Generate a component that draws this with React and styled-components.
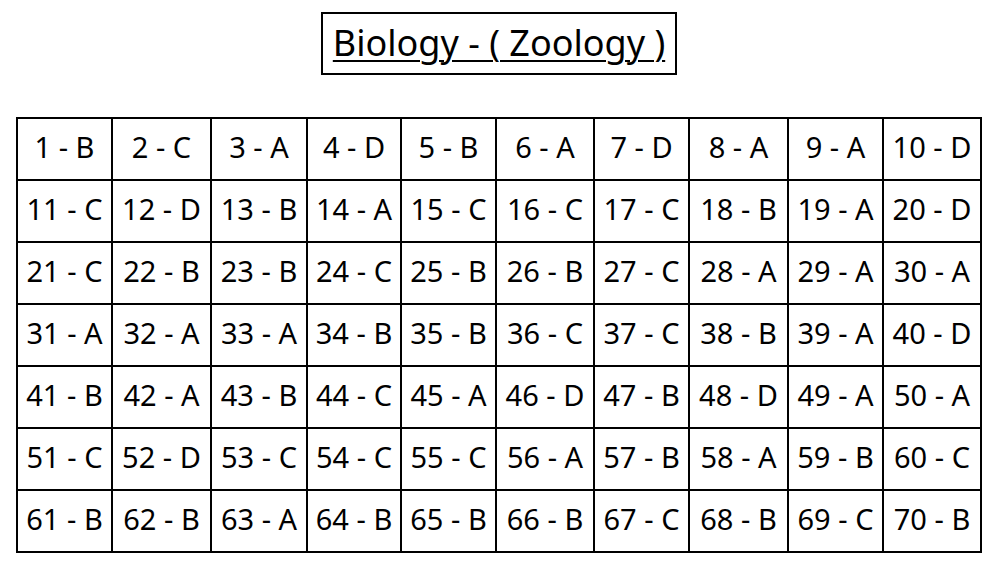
import React from "react";
import styled, { createGlobalStyle } from "styled-components";

const Global = createGlobalStyle`
  html, body { margin: 0; padding: 0; background: #ffffff; }
  body { font-family: "Noto Sans", "Open Sans", sans-serif; color: #000; }
`;

const Page = styled.div`
  width: 966px;
  margin-left: 16px;
  padding-top: 12px;
  display: flex;
  flex-direction: column;
  align-items: center;
  gap: 42px;
`;

const Title = styled.h1`
  margin: 0;
  box-sizing: border-box;
  width: 356px;
  height: 63px;
  padding-bottom: 2px;
  border: 2px solid #000;
  display: flex;
  align-items: center;
  justify-content: center;
  font-size: 36px;
  font-weight: 400;
  line-height: 1;
  text-decoration: underline;
  text-decoration-thickness: 2px;
  text-underline-offset: 4px;
  color: #000;
`;

const Table = styled.table`
  border-collapse: separate;
  border-spacing: 0;
  table-layout: fixed;
  width: 966px;
  border-left: 2px solid #000;
  border-top: 2px solid #000;
`;

const Cell = styled.td`
  box-sizing: border-box;
  height: 62px;
  padding: 0 0 6px 0;
  border-right: 2px solid #000;
  border-bottom: 2px solid #000;
  text-align: center;
  vertical-align: middle;
  white-space: nowrap;
  font-size: 29px;
  line-height: 1;
  color: #000;
`;

const widths = [95, 99, 96, 94, 95, 98, 95, 99, 95, 98];

const answers =
  "BCADBADAAD" +
  "CDBACCCBAD" +
  "CBBCBBCAAA" +
  "AAABBCCBAD" +
  "BABCADBDAA" +
  "CDCCCABABC" +
  "BBABBBCBCB";

export default function App() {
  const rows = [];
  for (let r = 0; r < 7; r++) {
    const cells = [];
    for (let c = 0; c < 10; c++) {
      const n = r * 10 + c + 1;
      cells.push(
        <Cell key={c}>
          {n} - {answers[n - 1]}
        </Cell>
      );
    }
    rows.push(<tr key={r}>{cells}</tr>);
  }
  return (
    <>
      <Global />
      <Page>
        <Title>Biology - ( Zoology )</Title>
        <Table>
          <colgroup>
            {widths.map((w, i) => (
              <col key={i} style={{ width: w }} />
            ))}
          </colgroup>
          <tbody>{rows}</tbody>
        </Table>
      </Page>
    </>
  );
}
